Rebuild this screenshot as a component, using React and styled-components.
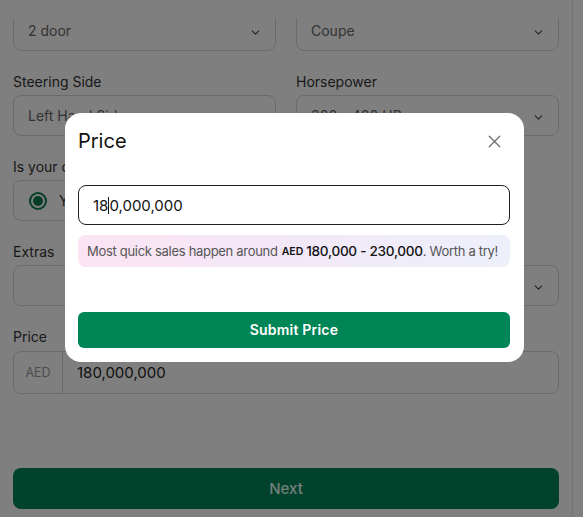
import React from "react";
import styled, { createGlobalStyle } from "styled-components";
import { ChevronDown, X } from "lucide-react";

const GlobalStyle = createGlobalStyle`
    html, body {
        margin: 0;
        padding: 0;
        background: #ffffff;
        font-family: Inter, "Noto Sans", Arial, sans-serif;
        overflow: hidden;
    }
`;

const Page = styled.div`
    width: 583px;
    height: 517px;
    display: flex;
    flex-direction: column;
    background: #ffffff;
`;

const TopBar = styled.div`
    height: 18px;
    width: 572px;
    background: #ffffff;
    border-right: 1px solid #e6e6e6;
    flex-shrink: 0;
`;

const Scroller = styled.div`
    flex: 1;
    width: 572px;
    overflow: hidden;
    border-right: 1px solid #e6e6e6;
`;

const Form = styled.div`
    margin-top: -8px;
    padding: 0 13px 0 13px;
    width: 546px;
    display: flex;
    flex-direction: column;
    gap: 22px;
`;

const Row = styled.div`
    display: grid;
    grid-template-columns: ${(p) => p.cols || "1fr 1fr"};
    gap: 20px;
`;

const Group = styled.div`
    display: flex;
    flex-direction: column;
    gap: ${(p) => p.gap || "5px"};
`;

const Label = styled.div`
    font-size: 14px;
    line-height: 17px;
    color: #333333;
`;

const Select = styled.div`
    height: 41px;
    box-sizing: border-box;
    border: 1px solid #d6d6d6;
    border-radius: 8px;
    display: flex;
    align-items: center;
    justify-content: space-between;
    padding: 0 13px 0 14px;
    font-size: 14px;
    color: #666666;
    svg {
        color: #444444;
        margin-top: 4px;
    }
`;

const RadioRow = styled.div`
    display: flex;
    gap: 10px;
`;

const RadioCard = styled.div`
    width: 200px;
    height: 41px;
    box-sizing: border-box;
    border: 1px solid #d6d6d6;
    border-radius: 8px;
    display: flex;
    align-items: center;
    gap: 12px;
    padding-left: 15px;
    font-size: 14px;
    color: #333333;
`;

const RadioDot = styled.span`
    width: 18px;
    height: 18px;
    box-sizing: border-box;
    border-radius: 50%;
    border: 2px solid ${(p) => (p.checked ? "#0a7a4e" : "#bbbbbb")};
    display: flex;
    align-items: center;
    justify-content: center;
    &::after {
        content: "";
        width: 10px;
        height: 10px;
        border-radius: 50%;
        background: ${(p) => (p.checked ? "#0a7a4e" : "transparent")};
    }
`;

const PriceField = styled.div`
    height: 43px;
    box-sizing: border-box;
    border: 1px solid #d6d6d6;
    border-radius: 8px;
    display: flex;
    align-items: stretch;
`;

const Addon = styled.div`
    width: 48px;
    border-right: 1px solid #d6d6d6;
    display: flex;
    align-items: center;
    justify-content: center;
    font-size: 12.5px;
    color: #999999;
`;

const PriceValue = styled.div`
    display: flex;
    align-items: center;
    padding-left: 14px;
    font-size: 15px;
    color: #222222;
`;

const NextButton = styled.button`
    margin-top: 52px;
    height: 41px;
    border: none;
    border-radius: 8px;
    background: #008556;
    color: #e6fff4;
    font-family: inherit;
    font-size: 15px;
    font-weight: 500;
`;

const Overlay = styled.div`
    position: fixed;
    inset: 0;
    background: rgba(0, 0, 0, 0.5);
    display: flex;
    align-items: flex-start;
    padding: 113px 0 0 65px;
    box-sizing: border-box;
`;

const Modal = styled.div`
    width: 459px;
    box-sizing: border-box;
    background: #ffffff;
    border-radius: 16px;
    padding: 16px 14px 14px 13px;
    display: flex;
    flex-direction: column;
`;

const ModalHeader = styled.div`
    height: 24px;
    display: flex;
    align-items: center;
    justify-content: space-between;
`;

const Title = styled.div`
    font-size: 20px;
    font-weight: 400;
    color: #111111;
`;

const Close = styled.button`
    border: none;
    background: none;
    padding: 0;
    margin-right: 5px;
    display: flex;
    color: #6b6b6b;
`;

const Input = styled.div`
    margin-top: 32px;
    height: 40px;
    box-sizing: border-box;
    border: 1px solid #1f1f1f;
    border-radius: 8px;
    display: flex;
    align-items: center;
    padding-left: 14px;
    font-size: 15px;
    color: #111111;
`;

const Caret = styled.span`
    display: inline-block;
    width: 1px;
    height: 17px;
    background: #111111;
`;

const Hint = styled.div`
    margin-top: 10px;
    height: 32px;
    border-radius: 8px;
    background: linear-gradient(90deg, #fbe3f2 0%, #f3e8f8 50%, #edf0fb 100%);
    display: flex;
    align-items: center;
    padding-left: 9px;
    font-size: 13px;
    letter-spacing: -0.3px;
    color: #555555;
    white-space: nowrap;
`;

const Currency = styled.span`
    font-size: 10.5px;
    font-weight: 600;
    letter-spacing: 0;
    color: #111111;
    margin: 0 3px 0 4px;
`;

const Range = styled.span`
    font-size: 13.6px;
    font-weight: 500;
    color: #111111;
`;

const SubmitButton = styled.button`
    margin-top: 45px;
    height: 36px;
    border: none;
    border-radius: 6px;
    background: #008556;
    color: #ffffff;
    font-family: inherit;
    font-size: 14px;
    font-weight: 600;
    letter-spacing: 0.2px;
    padding-bottom: 2px;
`;

export default function App() {
    return (
        <>
            <GlobalStyle />
            <Page>
                <TopBar />
                <Scroller>
                    <Form>
                        <Row>
                            <Select>
                                2 door <ChevronDown size={13} strokeWidth={2} />
                            </Select>
                            <Select>
                                Coupe <ChevronDown size={13} strokeWidth={2} />
                            </Select>
                        </Row>
                        <Row>
                            <Group>
                                <Label>Steering Side</Label>
                                <Select>
                                    Left Hand Side
                                    <ChevronDown size={13} strokeWidth={2} />
                                </Select>
                            </Group>
                            <Group>
                                <Label>Horsepower</Label>
                                <Select>
                                    300 - 400 HP
                                    <ChevronDown size={13} strokeWidth={2} />
                                </Select>
                            </Group>
                        </Row>
                        <Group>
                            <Label>Is your car insured in UAE?</Label>
                            <RadioRow>
                                <RadioCard>
                                    <RadioDot checked />
                                    Yes
                                </RadioCard>
                                <RadioCard>
                                    <RadioDot />
                                    No
                                </RadioCard>
                            </RadioRow>
                        </Group>
                        <Group>
                            <Label>Extras</Label>
                            <Select>
                                <span />
                                <ChevronDown size={13} strokeWidth={2} />
                            </Select>
                        </Group>
                        <Group gap="6px">
                            <Label>Price</Label>
                            <PriceField>
                                <Addon>AED</Addon>
                                <PriceValue>180,000,000</PriceValue>
                            </PriceField>
                        </Group>
                        <NextButton>Next</NextButton>
                    </Form>
                </Scroller>
            </Page>
            <Overlay>
                <Modal>
                    <ModalHeader>
                        <Title>Price</Title>
                        <Close>
                            <X size={21} strokeWidth={1.5} />
                        </Close>
                    </ModalHeader>
                    <Input>
                        18
                        <Caret />
                        0,000,000
                    </Input>
                    <Hint>
                        Most quick sales happen around
                        <Currency>AED</Currency>
                        <Range>180,000 - 230,000</Range>. Worth a try!
                    </Hint>
                    <SubmitButton>Submit Price</SubmitButton>
                </Modal>
            </Overlay>
        </>
    );
}
